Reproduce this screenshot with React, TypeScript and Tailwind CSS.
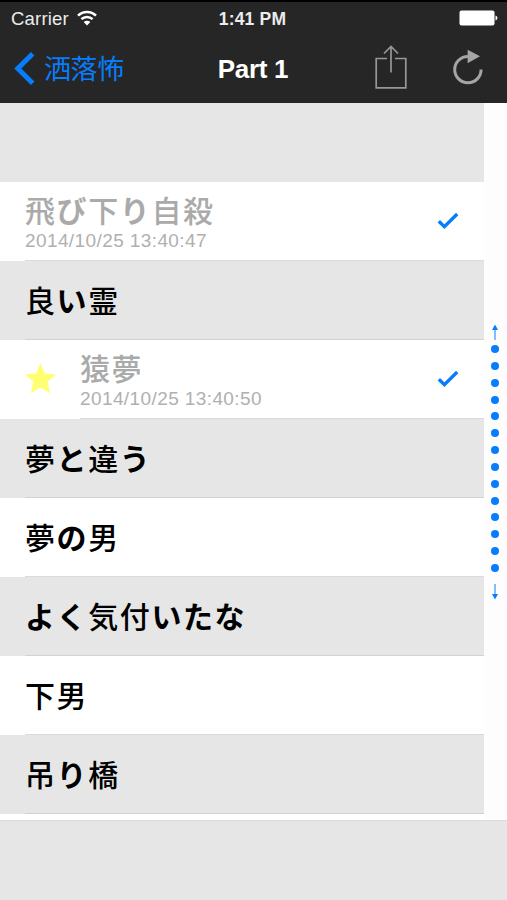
import { Fragment } from 'react';

interface Story {
  title: string;
  readAt?: string;
  starred?: boolean;
}

const stories: Story[] = [
  { title: '飛び下り自殺', readAt: '2014/10/25 13:40:47' },
  { title: '良い霊' },
  { title: '猿夢', readAt: '2014/10/25 13:40:50', starred: true },
  { title: '夢と違う' },
  { title: '夢の男' },
  { title: 'よく気付いたな' },
  { title: '下男' },
  { title: '吊り橋' },
];

const INDEX_DOTS = 14;

// Kana is set heavier than kanji
function Title({ text }: { text: string }) {
  const parts = text.split(/([\u3040-\u309f]+)/);
  return (
    <>
      {parts.map((part, i) => (
        <Fragment key={i}>
          {i % 2 === 1 ? <span className="font-bold">{part}</span> : part}
        </Fragment>
      ))}
    </>
  );
}

function StatusBar() {
  return (
    <div className="flex h-[32px] items-center justify-between pl-[11px] pr-[9px] text-[18.5px] text-[#ececec]">
      <div className="flex w-[160px] items-center gap-[8px] pt-[2px]">
        <span className="tracking-[0.2px]">Carrier</span>
        <svg width="20" height="16" viewBox="0 0 20 16" fill="none" stroke="#fff" strokeWidth="2.5" className="mb-[3px]">
          <path d="M1 5.6a12.8 12.8 0 0 1 18 0" />
          <path d="M4.4 9.2a8 8 0 0 1 11.2 0" />
          <path d="M10 15.4 6.7 12a4.7 4.7 0 0 1 6.6 0z" fill="#fff" stroke="none" />
        </svg>
      </div>
      <span className="mr-[4px] pt-[2px] text-[17.5px] font-bold tracking-[0.2px]">1:41 PM</span>
      <div className="flex w-[160px] justify-end">
        <svg width="39" height="16" viewBox="0 0 39 16" fill="#fff">
          <rect x="0.5" y="0.5" width="35" height="15" rx="2" />
          <path d="M36.5 5.5c2.6 1 2.6 4 0 5z" />
        </svg>
      </div>
    </div>
  );
}

function NavBar() {
  return (
    <div className="flex h-[69px] items-center">
      <button className="flex w-[200px] items-center gap-[9px] pl-[14px] text-[27px] text-[#087dfb]">
        <svg width="21" height="33" viewBox="0 0 21 33" fill="none" stroke="currentColor" strokeWidth="5">
          <path d="M18.7 1.8 3.8 16.5 18.7 31.2" />
        </svg>
        <span className="pt-[3px] font-normal leading-none tracking-[-0.4px]">洒落怖</span>
      </button>
      <h1 className="w-[106px] pt-px text-center text-[26px] font-bold tracking-[-0.3px] text-white">Part 1</h1>
      <div className="flex flex-1 items-center justify-end gap-[46px] pr-[24px]">
        <svg width="32" height="44" viewBox="0 0 32 44" fill="none" stroke="#979797" strokeWidth="1.7" className="mb-[4px]">
          <path d="M12 13.5H1.2v29.3h29.6V13.5H20" />
          <path d="M16 27.5V2M9 8.5l7-7 7 7" />
        </svg>
        <svg width="30" height="36" viewBox="0 0 30 36" fill="none" stroke="#a5a5a5" strokeWidth="3" className="mb-[3px]">
          <path d="M28.1 20.5A13.2 13.2 0 1 1 15 7.4" />
          <path d="M14.6.8 27 7.3l-12.4 7z" fill="#a5a5a5" stroke="none" />
        </svg>
      </div>
    </div>
  );
}

function StoryRow({ story, shaded }: { story: Story; shaded: boolean }) {
  return (
    <li className={`flex h-[79px] ${shaded ? 'bg-[#e6e6e6]' : 'bg-white'}`}>
      {story.starred && (
        <div className="flex w-[56px] items-center pb-[2px] pl-[25px]">
          <svg width="31" height="31" viewBox="0 0 31 31" fill="#ffff72" className="shrink-0">
            <path d="M15.5 0 19.9 10.4 31 11.4 22.6 18.8 25.1 30.2 15.5 24.2 5.9 30.2 8.4 18.8 0 11.4 11.1 10.4z" />
          </svg>
        </div>
      )}
      <div className={`flex flex-1 items-center border-b ${story.starred ? 'ml-[24px]' : 'ml-[25px]'} ${shaded ? 'border-[#d2d2d2]' : 'border-[#dadada]'}`}>
        <div className="flex-1 pt-[4px]">
          <p className={`text-[30px] font-medium leading-[36px] tracking-[1.6px] ${story.readAt ? 'text-[#aaa]' : 'text-black'}`}>
            <Title text={story.title} />
          </p>
          {story.readAt && (
            <p className="text-[19px] leading-[22px] tracking-[0.4px] text-[#b0b0b0]">{story.readAt}</p>
          )}
        </div>
        {story.readAt && (
          <svg width="22" height="18" viewBox="0 0 22 18" fill="none" stroke="#087dfb" strokeWidth="3.4" className="mr-[25px]">
            <path d="M1.8 9.2 7.4 14.6 20.2 2" />
          </svg>
        )}
      </div>
    </li>
  );
}

function IndexArrow({ down }: { down?: boolean }) {
  return (
    <svg width="8" height="16" viewBox="0 0 8 16" className={down ? 'rotate-180' : ''}>
      <path d="M4 3v13" stroke="#087dfb" strokeWidth="1" />
      <path d="M4 .5 7 6H1z" fill="#087dfb" />
    </svg>
  );
}

function SectionIndex() {
  return (
    <div className="flex w-[23px] flex-col items-center bg-[#fdfdfd] pr-px pt-[221px]">
      <IndexArrow />
      <div className="flex flex-col gap-[8.85px] pb-[12.5px] pt-[5px]">
        {Array.from({ length: INDEX_DOTS }, (_, i) => (
          <span key={i} className="size-[8px] rounded-full bg-[#087dfb]" />
        ))}
      </div>
      <IndexArrow down />
    </div>
  );
}

export default function App() {
  return (
    <div className="flex h-[900px] w-[507px] flex-col overflow-hidden bg-[#e6e6e6] font-['Liberation_Sans','Noto_Sans_CJK_JP',sans-serif]" lang="ja">
      <header className="h-[103px] border-t-2 border-t-black bg-[#262626]">
        <StatusBar />
        <NavBar />
      </header>
      <main className="flex h-[718px] border-b border-[#dadada] bg-white">
        <div className="w-[484px]">
          <div className="h-[79px] bg-[#e6e6e6]" />
          <ul>
            {stories.map((story, i) => (
              <StoryRow key={story.title} story={story} shaded={i % 2 === 1} />
            ))}
          </ul>
        </div>
        <SectionIndex />
      </main>
    </div>
  );
}
